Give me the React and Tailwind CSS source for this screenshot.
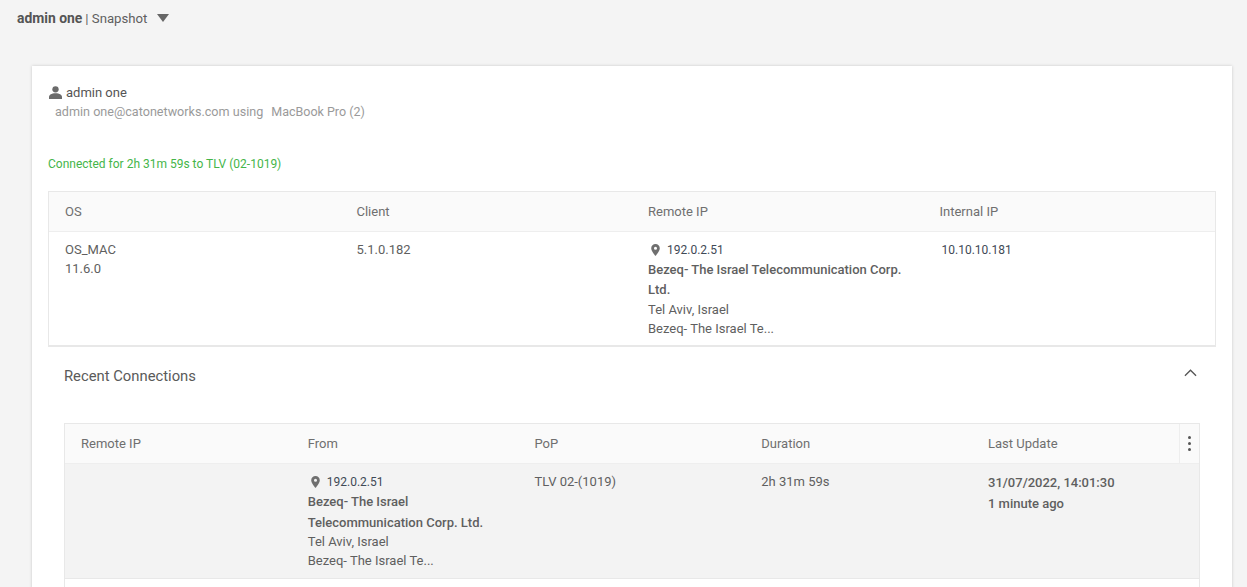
import React from "react";

function PinIcon({ className }) {
  return (
    <svg viewBox="0 0 10 14" className={className} fill="currentColor">
      <path
        fillRule="evenodd"
        d="M5 0C2.2 0 0 2.2 0 5c0 3.6 5 9 5 9s5-5.4 5-9c0-2.8-2.2-5-5-5zm0 6.8A1.8 1.8 0 1 1 5 3.2a1.8 1.8 0 0 1 0 3.6z"
      />
    </svg>
  );
}

function UserIcon() {
  return (
    <svg viewBox="0 0 14 14" className="ml-[1px] h-[13px] w-[13px] text-[#6b6b6b]" fill="currentColor">
      <circle cx="7" cy="3.6" r="3.4" />
      <path d="M0 14v-2.2C0 9.6 2.6 7.8 7 7.8s7 1.8 7 4V14z" />
    </svg>
  );
}

function IpBlock({ firstClass, companyClass }) {
  return (
    <div className="text-[13px] text-[#5f5f5f]">
      <div className={firstClass}>
        <PinIcon className="ml-[3px] h-[12px] w-[9px] text-[#6f6f6f]" />
        <span className="ml-[7px] text-[12px] text-[#3f4a56]">192.0.2.51</span>
      </div>
      <div className={companyClass}>
        Bezeq- The Israel Telecommunication Corp. Ltd.
      </div>
      <div className="leading-[19px]">Tel Aviv, Israel</div>
      <div className="leading-[19px]">Bezeq- The Israel Te...</div>
    </div>
  );
}

export default function App() {
  return (
    <div
      className="h-[587px] overflow-hidden bg-[#f4f4f4] text-[#5f5f5f]"
      style={{ fontFamily: "Roboto, sans-serif" }}
    >
      <div className="flex h-[66px] items-start pl-[17px] pt-[10px]">
        <div className="flex h-[17px] items-center">
          <span className="text-[13.9px] font-bold text-[#555]">admin one</span>
          <span className="ml-[3px] text-[13.2px]">| Snapshot</span>
          <span className="ml-[10px] mb-[2px] h-0 w-0 border-x-[6px] border-t-[8px] border-x-transparent border-t-[#666]" />
        </div>
      </div>

      <div className="ml-[32px] w-[1200px] bg-white px-4 pt-[18px] shadow-[0_0_3px_rgba(0,0,0,0.18)]">
        <div className="flex h-[17px] items-center">
          <UserIcon />
          <span className="ml-[4px] text-[13px] text-[#555]">admin one</span>
        </div>
        <div className="ml-[7px] mt-[2px] flex h-[17px] text-[12.6px] leading-[18px] text-[#9a9a9a]">
          <span>admin one@catonetworks.com using</span>
          <span className="ml-[8px] text-[12.5px]">MacBook Pro (2)</span>
        </div>
        <div className="mt-[36px] h-[16px] text-[12px] leading-[16px] text-[#44b549]">
          Connected for 2h 31m 59s to TLV (02-1019)
        </div>

        <div className="mt-[19px] border border-b-2 border-[#e8e8e8]">
          <div className="grid h-[40px] grid-cols-[291.5px_291.5px_291.5px_1fr] items-center border-b border-[#eee] bg-[#fafafa] pt-[1px] text-[13px] text-[#6f6f6f]">
            <div className="pl-4">OS</div>
            <div className="pl-4">Client</div>
            <div className="pl-4">Remote IP</div>
            <div className="pl-4">Internal IP</div>
          </div>
          <div className="grid h-[113px] grid-cols-[291.5px_291.5px_291.5px_1fr] pt-[8px]">
            <div className="pl-4 text-[13px] leading-[19px]">
              <div>OS_MAC</div>
              <div>11.6.0</div>
            </div>
            <div className="pl-4 text-[13px] leading-[19px]">5.1.0.182</div>
            <div className="w-[270px] pl-4">
              <IpBlock
                firstClass="mb-[1px] flex h-[19px] items-center"
                companyClass="font-medium leading-[20px]"
              />
            </div>
            <div className="pl-[18px] pt-[1px] text-[12px] leading-[19px] text-[#3f4a56]">10.10.10.181</div>
          </div>
        </div>

        <div className="flex h-[60px] items-start justify-between pl-4 pr-[19px] pt-[19px]">
          <span className="text-[14.8px] leading-[20px] text-[#5a5a5a]">Recent Connections</span>
          <svg viewBox="0 0 14 8" className="mt-[3px] h-[8px] w-[13px]" fill="none" stroke="#555" strokeWidth="1.4">
            <path d="M1 7l6-6 6 6" />
          </svg>
        </div>

        <div className="mx-4 mt-[16px] border-x border-t border-[#e8e8e8]">
          <div className="grid h-[40px] grid-cols-[226.75px_226.75px_226.75px_226.75px_1fr_20px] items-center border-b border-[#eee] bg-[#fafafa] text-[13px] text-[#6f6f6f]">
            <div className="pl-4">Remote IP</div>
            <div className="pl-4">From</div>
            <div className="pl-4">PoP</div>
            <div className="pl-4">Duration</div>
            <div className="pl-4">Last Update</div>
            <div className="flex h-full flex-col items-center justify-center gap-[3px] border-l border-[#eee]">
              <span className="h-[3px] w-[3px] rounded-full bg-[#555]" />
              <span className="h-[3px] w-[3px] rounded-full bg-[#555]" />
              <span className="h-[3px] w-[3px] rounded-full bg-[#555]" />
            </div>
          </div>
          <div className="grid h-[115px] grid-cols-[226.75px_226.75px_226.75px_226.75px_1fr] border-b border-[#e8e8e8] bg-[#f3f3f3] pt-[8px]">
            <div />
            <div className="pl-4">
              <IpBlock
                firstClass="flex h-[19px] items-center"
                companyClass="-mb-[1px] font-medium leading-[21px]"
              />
            </div>
            <div className="pl-4 text-[13px] leading-[19px]">TLV 02-(1019)</div>
            <div className="pl-4 text-[13px] leading-[19px]">2h 31m 59s</div>
            <div className="pl-4 text-[13px] font-medium leading-[21px]">
              <div>31/07/2022, 14:01:30</div>
              <div>1 minute ago</div>
            </div>
          </div>
          <div className="h-[10px]" />
        </div>
      </div>
    </div>
  );
}
